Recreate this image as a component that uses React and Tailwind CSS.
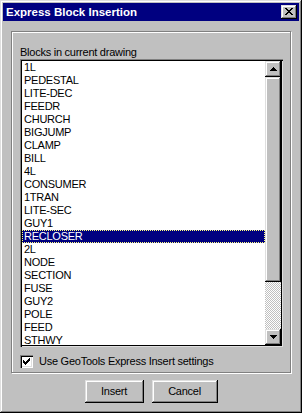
import React from "react";

const blocks = [
  "1L", "PEDESTAL", "LITE-DEC", "FEEDR", "CHURCH", "BIGJUMP", "CLAMP", "BILL",
  "4L", "CONSUMER", "1TRAN", "LITE-SEC", "GUY1", "RECLOSER", "2L", "NODE",
  "SECTION", "FUSE", "GUY2", "POLE", "FEED", "STHWY",
];

const raised =
  "shadow-[inset_-1px_-1px_#000,inset_1px_1px_#dfdfdf,inset_-2px_-2px_#808080,inset_2px_2px_#fff]";

// tiny pixel bitmaps, drawn as svg rects
const Bitmap = ({ rows, className }) => (
  <svg width={rows[0].length} height={rows.length} className={className} shapeRendering="crispEdges">
    {rows.map((r, y) =>
      r.split("").map((c, x) => (c === "#" ? <rect key={x + "-" + y} x={x} y={y} width="1" height="1" fill="#000" /> : null))
    )}
  </svg>
);

const closeX = ["##....##", ".##..##.", "..####..", "...##...", "..####..", ".##..##.", "##....##"];
const check = ["......#", ".....##", "#...###", "##.###.", "#####..", ".###...", "..#...."];
const up = ["...#...", "..###..", ".#####.", "#######"];
const down = ["#######", ".#####.", "..###..", "...#..."];

const App = () => {
  const selected = "RECLOSER";

  return (
    <div
      className={`w-[302px] h-[413px] bg-[#c0c0c0] p-[3px] flex flex-col text-black ${raised}`}
      style={{ fontFamily: '"Liberation Sans", Arial, sans-serif' }}
    >
      {/* title bar */}
      <div className="h-[18px] bg-[#000080] flex items-center justify-between pl-[3px] pr-[2px]">
        <span className="text-white font-bold text-[11.5px] leading-[18px]">Express Block Insertion</span>
        <button className={`w-[16px] h-[14px] bg-[#c0c0c0] flex items-center justify-center ${raised}`}>
          <Bitmap rows={closeX} className="mt-[-1px]" />
        </button>
      </div>

      {/* group box */}
      <div className="ml-[8px] mt-[10px] w-[280px] h-[342px] border border-[#808080] shadow-[inset_1px_1px_#fff,1px_1px_#fff] pl-[8px] pt-[14px] flex flex-col">
        <div className="h-[13px] leading-[13px] text-[11px] tracking-[-0.25px]">Blocks in current drawing</div>

        <div className="w-[263px] h-[288px] p-[2px] bg-white shadow-[inset_1px_1px_#808080,inset_2px_2px_#000,inset_-1px_-1px_#dfdfdf,inset_-2px_-2px_#000] flex">
          <div className="flex-1 overflow-hidden">
            {blocks.map((b) => (
              <div
                key={b}
                className={
                  b === selected
                    ? "h-[13px] leading-[11px] text-[11px] tracking-[-0.25px] pl-[1px] bg-[#000080] text-white border border-dotted border-[#ffff7f]"
                    : "h-[13px] leading-[13px] text-[11px] tracking-[-0.25px] pl-[2px]"
                }
              >
                {b}
              </div>
            ))}
          </div>

          {/* scrollbar */}
          <div className="w-[16px] flex flex-col">
            <div className={`h-[16px] bg-[#c0c0c0] flex items-center justify-center ${raised}`}>
              <Bitmap rows={up} className="mt-[-1px]" />
            </div>
            <div className={`h-[205px] bg-[#c0c0c0] ${raised}`} />
            <div className="flex-1 bg-[repeating-conic-gradient(#c0c0c0_0_25%,#fff_0_50%)] bg-[length:2px_2px]" />
            <div className={`h-[16px] bg-[#c0c0c0] flex items-center justify-center ${raised}`}>
              <Bitmap rows={down} />
            </div>
          </div>
        </div>

        {/* checkbox */}
        <label className="mt-[8px] flex items-center h-[13px]">
          <span className="w-[13px] h-[13px] bg-white shadow-[inset_1px_1px_#808080,inset_2px_2px_#000,inset_-1px_-1px_#fff,inset_-2px_-2px_#dfdfdf] flex items-center justify-center">
            <Bitmap rows={check} />
          </span>
          <span className="ml-[6px] text-[11px] leading-[13px] tracking-[-0.25px]">Use GeoTools Express Insert settings</span>
        </label>
      </div>

      {/* buttons */}
      <div className="mt-[7px] flex justify-center gap-[8px]">
        <button className={`w-[59px] h-[23px] bg-[#c0c0c0] text-[11px] tracking-[-0.25px] ${raised}`}>Insert</button>
        <button className={`w-[66px] h-[23px] bg-[#c0c0c0] text-[11px] tracking-[-0.25px] ${raised}`}>Cancel</button>
      </div>
    </div>
  );
};

export default App;
